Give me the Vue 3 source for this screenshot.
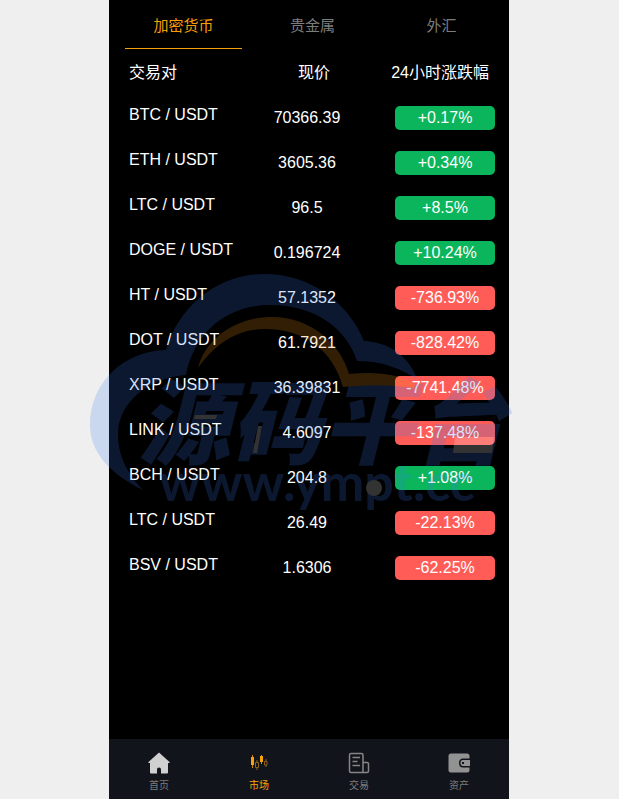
<template>
  <div class="page">
    <main class="market">
      <div class="tabs">
        <button v-for="(tab, idx) in tabs" :key="tab" type="button" :class="{ active: current === idx }" @click="current = idx">{{ tab }}</button>
      </div>

      <table class="list">
        <thead>
          <tr>
            <th class="pair">交易对</th>
            <th class="price">现价</th>
            <th class="rate">24小时涨跌幅</th>
          </tr>
        </thead>
        <tbody>
          <tr v-for="(item, idx) in list" :key="idx">
            <td class="pair">{{ item.name }} / USDT</td>
            <td class="price">{{ item.price }}</td>
            <td class="rate"><span class="badge" :class="{ down: item.rate.startsWith('-') }">{{ item.rate }}</span></td>
          </tr>
        </tbody>
      </table>

      <nav class="tabbar">
        <a href="#home">
          <svg viewBox="0 0 22 22"><path fill="#d0d0d0" d="M11 0.500L21.500 10Q22 11 21 11H20V20.500Q20 21.500 19 21.500H13V17.500Q13 15.500 11 15.500T9 17.500V21.500H3Q2 21.500 2 20.500V11H1Q0 11 0.500 10Z" /></svg>
          <span>首页</span>
        </a>
        <a href="#market" class="active">
          <svg viewBox="0 0 22 22">
            <path fill="#f7a208" d="M3 5h3v8H3zM12 4h3v6h-3z" />
            <path fill="none" stroke="#f7a208" stroke-width="0.800" d="M4.500 3v13M13.500 3v9" />
            <path fill="none" stroke="#8a6118" stroke-width="1" d="M9 8v2M9 16v2M7.500 10.500h3v5h-3zM18 7v2M18 13v2M16.500 9.500h2.500v3.500h-2.500z" />
          </svg>
          <span>市场</span>
        </a>
        <a href="#trade">
          <svg viewBox="0 0 22 22"><path fill="none" stroke="#858585" stroke-width="1.500" d="M19 20.500H3Q1.500 20.500 1.500 19V3Q1.500 1.500 3 1.500H13.500Q15 1.500 15 3V20.500M15 10.500H19Q20.500 10.500 20.500 12V19Q20.500 20.500 19 20.500M4.500 5.500H12M4.500 9.500H9.500M4.500 13.500H12" /></svg>
          <span>交易</span>
        </a>
        <a href="#assets">
          <svg viewBox="0 0 22 22">
            <path fill="#929292" d="M3 1.500H19Q21.500 1.500 21.500 4V6.500H15Q11 6.500 11 11T15 15.500H21.500V18Q21.500 20.500 19 20.500H3Q0.500 20.500 0.500 18V4Q0.500 1.500 3 1.500Z" />
            <path fill="#929292" fill-rule="evenodd" d="M15 8H22V14H15Q12.500 14 12.500 11T15 8ZM14 10V12H16V10Z" />
          </svg>
          <span>资产</span>
        </a>
      </nav>

      <svg class="watermark" viewBox="0 0 440 260" aria-hidden="true">
        <g opacity="0.200">
          <g fill="#377af0">
            <path d="M53 220C20 204 0 182 0 155C0 112 34 81 76 80C88 38 126 4 174 4C222 4 259 34 274 71C299 72 319 86 327 109C309 98 292 91 267 91C256 57 223 35 181 35C136 35 104 63 96 105C70 106 28 125 28 165C28 185 37 204 53 220Z" />
            <text class="mark-title" x="48" y="187">源码平台</text>
            <text class="mark-url" x="69" y="231">www.ympt.cc</text>
          </g>
          <path fill="#fa9614" d="M108 98C116 67 147 47 182 47C222 47 251 75 259 104C284 101 311 104 325 114L324 118C300 114 276 115 253 117C243 81 215 59 175 59C147 59 125 74 108 98Z" />
          <path fill="#fff" d="M105 145h22l-1 4h-22zM168 156h4l-5 27h-4zM365 167h39l-2 16h-39z" />
          <circle cx="284" cy="218" r="8" fill="#fff" />
        </g>
      </svg>
    </main>
  </div>
</template>

<script setup>
  import { ref } from 'vue'

  const current = ref(0)
  const tabs = ['加密货币', '贵金属', '外汇']

  const list = ref([
    { name: 'BTC', price: '70366.39', rate: '+0.17%' },
    { name: 'ETH', price: '3605.36', rate: '+0.34%' },
    { name: 'LTC', price: '96.5', rate: '+8.5%' },
    { name: 'DOGE', price: '0.196724', rate: '+10.24%' },
    { name: 'HT', price: '57.1352', rate: '-736.93%' },
    { name: 'DOT', price: '61.7921', rate: '-828.42%' },
    { name: 'XRP', price: '36.39831', rate: '-7741.48%' },
    { name: 'LINK', price: '4.6097', rate: '-137.48%' },
    { name: 'BCH', price: '204.8', rate: '+1.08%' },
    { name: 'LTC', price: '26.49', rate: '-22.13%' },
    { name: 'BSV', price: '1.6306', rate: '-62.25%' },
  ])
</script>

<style>
  body {
    background: #efefef;
  }
</style>

<style scoped>
  .page {
    display: grid;
    grid-template-columns: 1fr minmax(0, 400px) 1fr;
    min-height: 100vh;
    padding-right: 1px;
    overflow: hidden;
    font-family: "Liberation Sans", "Noto Sans CJK SC", sans-serif;
    font-size: 16px;
  }
  .market {
    grid-column: 2;
    position: relative;
    display: flex;
    flex-direction: column;
    background: #000;
    color: #fff;
  }
  .tabs {
    display: flex;
    gap: 12px;
    padding: 0 9px 0 16px;
  }
  .tabs button {
    flex: 1;
    height: 49px;
    padding: 4px 0 0;
    border: 0;
    border-bottom: 1px solid transparent;
    background: none;
    color: #7d7d7d;
    font-family: inherit;
    font-size: 15px;
    line-height: 24px;
    cursor: pointer;
  }
  .tabs button.active {
    color: #f79f08;
    border-color: #f79f08;
  }
  .list {
    margin: 0 14px 0 20px;
    border-collapse: collapse;
    table-layout: fixed;
  }
  .list th {
    height: 47px;
    padding: 0;
    font-weight: 400;
    line-height: 24px;
    white-space: nowrap;
  }
  .list td {
    height: 35px;
    padding: 10px 0 0;
    line-height: 24px;
    vertical-align: top;
  }
  .list .pair {
    text-align: left;
  }
  .list td.pair {
    padding-top: 7px;
    height: 38px;
  }
  .list .price {
    width: 100px;
    text-align: center;
  }
  .list th.price {
    padding-left: 14px;
    width: 86px;
  }
  .list .rate {
    width: 138px;
    text-align: right;
  }
  .list th.rate {
    padding-right: 6px;
    width: 132px;
  }
  .badge {
    display: block;
    width: 100px;
    height: 24px;
    margin-left: auto;
    border-radius: 5px;
    background: #0bb55b;
    text-align: center;
  }
  .badge.down {
    background: #ff5c57;
  }
  .tabbar {
    display: flex;
    height: 60px;
    margin-top: auto;
    background: #12141c;
  }
  .tabbar a {
    flex: 1;
    display: flex;
    flex-direction: column;
    align-items: center;
    padding-top: 13px;
    gap: 4px;
    color: #7d7d7d;
    font-size: 10px;
    line-height: 16px;
    text-decoration: none;
  }
  .tabbar a.active {
    color: #f7a208;
  }
  .tabbar svg {
    width: 22px;
    height: 22px;
  }
  .watermark {
    position: absolute;
    top: 270px;
    left: -19px;
    width: 440px;
    height: 260px;
    overflow: visible;
    pointer-events: none;
  }
  .mark-title {
    font: italic 900 92px "Noto Sans CJK SC", sans-serif;
  }
  .mark-url {
    font: 700 52px Lato, sans-serif;
  }
</style>
